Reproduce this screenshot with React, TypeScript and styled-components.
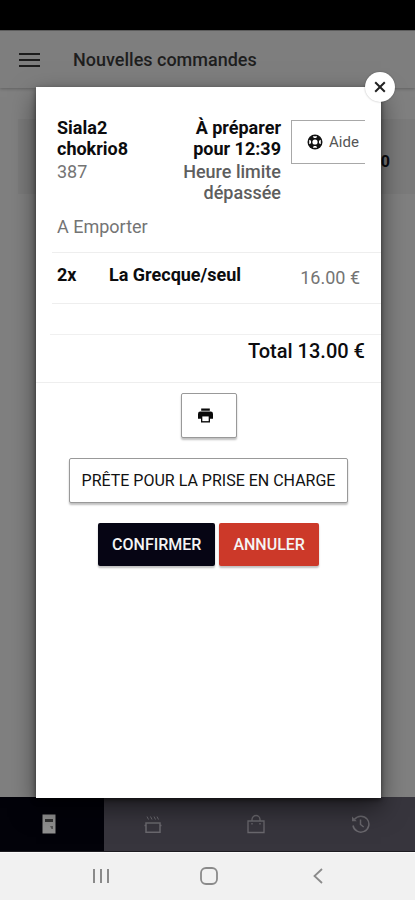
import React from "react";
import styled, { createGlobalStyle, css } from "styled-components";

const GlobalStyle = createGlobalStyle`
  * { box-sizing: border-box; }
  body { margin: 0; background: #000; font-family: Roboto, "Liberation Sans", sans-serif; color: #0c0c0e; }
  button { font-family: inherit; cursor: pointer; }
  h1, p, ul { margin: 0; padding: 0; }
  svg { display: block; }
`;

const Phone = styled.div`
  display: flex;
  flex-direction: column;
  min-height: 100vh;
`;

const StatusBar = styled.div`
  height: 30px;
  background: #000;
`;

const Screen = styled.div`
  position: relative;
  flex: 1;
  display: flex;
  flex-direction: column;
`;

const AppBar = styled.header`
  position: relative;
  display: flex;
  align-items: center;
  gap: 32px;
  height: 58px;
  padding: 0 18px;
  background: #7e7e7e;
  border-top: 1px solid #5c5c5c;
  box-shadow: 0 1px 3px rgba(0, 0, 0, 0.25);
`;

const MenuButton = styled.button`
  padding: 0;
  border: 0;
  background: none;
  color: #1c1c1c;
`;

const Title = styled.h1`
  font-size: 18px;
  font-weight: 500;
  line-height: 24px;
  color: #1e1e1e;
`;

const Orders = styled.main`
  flex: 1;
  padding: 31px 0 0 18px;
  background: #808080;
`;

const OrderCard = styled.div`
  display: flex;
  align-items: center;
  justify-content: flex-end;
  height: 75px;
  padding: 10px 25px 0 0;
  background: #7b7b7b;
  font-size: 16px;
  font-weight: 700;
`;

const Tabs = styled.nav`
  display: grid;
  grid-template-columns: repeat(4, 1fr);
  height: 55px;
  background: #37353d;
  border-bottom: 1px solid #1c1b20;
`;

const Tab = styled.button<{ $active?: boolean }>`
  display: flex;
  align-items: center;
  justify-content: center;
  padding: 0 6px 0 0;
  border: 0;
  background: ${(p) => (p.$active ? "#020209" : "transparent")};
  color: ${(p) => (p.$active ? "#909090" : "#6a686e")};
`;

const Overlay = styled.div`
  position: absolute;
  inset: 0;
  display: flex;
  padding: 57px 34px 54px 36px;
`;

const Dialog = styled.section`
  position: relative;
  flex: 1;
  min-width: 0;
  background: #fff;
  box-shadow: 0 10px 24px rgba(0, 0, 0, 0.5), 0 2px 5px rgba(0, 0, 0, 0.5);
`;

const CloseButton = styled.button`
  position: absolute;
  top: -15px;
  right: -14px;
  display: flex;
  align-items: center;
  justify-content: center;
  width: 30px;
  height: 30px;
  padding: 0;
  border: 0;
  border-radius: 50%;
  background: #fff;
  box-shadow: 0 0 2px rgba(0, 0, 0, 0.3);
  color: #222;
`;

const Summary = styled.div`
  display: flex;
  gap: 10px;
  padding: 30px 16px 0 21px;
  font-size: 18px;
  line-height: 21px;
`;

const Customer = styled.div`
  flex: 1;
`;

const Deadline = styled.div`
  width: 110px;
  text-align: right;
`;

const Strong = styled.p`
  margin-bottom: 2px;
  font-weight: 700;
`;

const Muted = styled.p<{ $medium?: boolean }>`
  color: ${(p) => (p.$medium ? "#5e5e5e" : "#747474")};
  font-weight: ${(p) => (p.$medium ? 500 : 400)};
`;

const HelpButton = styled.button`
  display: flex;
  align-items: center;
  align-self: flex-start;
  gap: 6px;
  width: 74px;
  height: 44px;
  margin-top: 3px;
  padding: 0 0 0 15px;
  border: 1px solid #a8a8a8;
  border-right: 0;
  background: #fff;
  color: #555;
  font-size: 15px;
`;

const Mode = styled.p`
  padding: 13px 21px 15px;
  font-size: 18px;
  line-height: 21px;
  color: #747474;
`;

const Items = styled.ul`
  margin-left: 16px;
  border-top: 1px solid #eee;
  list-style: none;
`;

const Item = styled.li`
  display: flex;
  height: 51px;
  padding: 11px 21px 0 5px;
  border-bottom: 1px solid #eee;
  font-size: 18px;
  line-height: 21px;
`;

const Quantity = styled.span`
  width: 52px;
  font-weight: 700;
`;

const Name = styled.span`
  flex: 1;
  font-weight: 700;
`;

const Price = styled.span`
  padding-top: 3px;
  color: #747474;
`;

const Total = styled.p`
  margin: 30px 0 0 14px;
  padding: 4px 16px 19px 0;
  border-top: 1px solid #f0f0f0;
  font-size: 20px;
  font-weight: 500;
  line-height: 24px;
  text-align: right;
`;

const Actions = styled.div`
  display: flex;
  flex-direction: column;
  align-items: center;
  gap: 20px;
  padding: 10px 0 0;
  border-top: 1px solid #eee;
`;

const ButtonRow = styled.div`
  display: flex;
  gap: 4px;
`;

const Button = styled.button<{ $tone?: "dark" | "red"; $icon?: boolean }>`
  display: flex;
  align-items: center;
  justify-content: center;
  height: 45px;
  padding: ${(p) => (p.$icon ? "0 23px 0 16px" : "0 12px")};
  border: 1px solid #999;
  border-radius: 2px;
  background: #fff;
  box-shadow: 0 2px 2px rgba(0, 0, 0, 0.25);
  color: #111;
  font-size: 16px;
  font-weight: 400;
  line-height: 20px;
  white-space: nowrap;
  ${(p) =>
    p.$tone &&
    css`
      height: 43px;
      padding: 0 14px;
      border: 0;
      background: ${p.$tone === "dark" ? "#060514" : "#cc3929"};
      color: #f4f4f4;
      font-weight: 500;
    `}
`;

const SystemNav = styled.nav`
  display: grid;
  grid-template-columns: repeat(3, 1fr);
  justify-items: center;
  align-items: center;
  height: 48px;
  padding: 0 43px 2px 47px;
  background: #f1f1f1;
  border-top: 1px solid #fafafa;
`;

const SystemButton = styled.button`
  padding: 0;
  border: 0;
  background: none;
  color: #8a8a8a;
`;

const MenuIcon = () => (
  <svg width="23" height="16" viewBox="0 0 23 16" stroke="currentColor" strokeWidth="2">
    <path d="M1 2h21M1 8h21M1 14h21" />
  </svg>
);

const CloseIcon = () => (
  <svg width="12" height="12" viewBox="0 0 12 12" stroke="currentColor" strokeWidth="2">
    <path d="M1.2 1.2l9.6 9.6M10.8 1.2l-9.6 9.6" />
  </svg>
);

const HelpIcon = () => (
  <svg width="16" height="16" viewBox="0 0 16 16" fill="none">
    <circle cx="8" cy="8" r="7.5" fill="#111" />
    <circle cx="8" cy="8" r="2.6" fill="#fff" />
    <path d="M5.8 2.2h4.4L9.2 4H6.800zM5.800 13.800h4.400L9.200 12H6.800zM2.200 5.800v4.400L4 9.200V6.800zM13.800 5.800v4.400L12 9.200V6.800z" fill="#fff" />
  </svg>
);

const PrintIcon = () => (
  <svg width="15" height="15" viewBox="0 0 16 15">
    <path d="M3.4 0h9.2v2.5H3.4zM2.6 3.3h10.8A2.5 2.5 0 0 1 16 5.8V11h-3.2v4H3.2v-4H0V5.8A2.5 2.5 0 0 1 2.6 3.3z" fill="#090909" />
    <path d="M4.6 8.5h6.8v5H4.6z" fill="#fff" />
  </svg>
);

const ReceiptIcon = () => (
  <svg width="14" height="20" viewBox="0 0 14 20">
    <path d="M0.5 0.5h13v19h-13z" fill="currentColor" />
    <path d="M3 5h8v3H3z" fill="#333" />
    <path d="M8 12h3v3H9.5z" fill="#555" />
  </svg>
);

const CookingIcon = () => (
  <svg width="18" height="20" viewBox="0 0 18 20" fill="none" stroke="currentColor" strokeWidth="1.5">
    <path d="M3 2.500l1.500 3M6.500 2.500L8 5.500M10 2.500l1.500 3M13 2.500l1.500 3" strokeWidth="1" />
    <path d="M2 9h14v9.300H2zM0.500 11.500h1.500M16 11.500h1.500" />
  </svg>
);

const BagIcon = () => (
  <svg width="18" height="20" viewBox="0 0 18 20" fill="none" stroke="currentColor" strokeWidth="1.3">
    <path d="M1 7h16v11.500H1zM5 7V5.500a4 4 0 0 1 8 0V7" />
    <path d="M5 9v1.500M13 9v1.500" />
  </svg>
);

const HistoryIcon = () => (
  <svg width="19" height="20" viewBox="0 0 19 20" fill="none" stroke="currentColor" strokeWidth="1.5">
    <path d="M3.500 5.300A8 8 0 1 1 2 11.500M9.500 5.500v5l3.200 2.500" />
    <path d="M1 2.500v4.800h4.800z" fill="currentColor" stroke="none" />
  </svg>
);

const RecentsIcon = () => (
  <svg width="18" height="16" viewBox="0 0 18 16" stroke="currentColor" strokeWidth="2">
    <path d="M2 1v14M9 1v14M16 1v14" />
  </svg>
);

const HomeIcon = () => (
  <svg width="18" height="18" viewBox="0 0 18 18" fill="none" stroke="currentColor" strokeWidth="1.8">
    <rect x="1" y="1" width="16" height="16" rx="5" />
  </svg>
);

const BackIcon = () => (
  <svg width="10" height="16" viewBox="0 0 10 16" fill="none" stroke="currentColor" strokeWidth="1.8">
    <path d="M9 1L1.500 8 9 15" />
  </svg>
);

const tabs = [
  { label: "Commandes", Icon: ReceiptIcon, active: true },
  { label: "En préparation", Icon: CookingIcon },
  { label: "À emporter", Icon: BagIcon },
  { label: "Historique", Icon: HistoryIcon },
];

const items = [{ quantity: "2x", name: "La Grecque/seul", price: "16.00 €" }];

export default function App() {
  return (
    <>
      <GlobalStyle />
      <Phone>
        <StatusBar />
        <Screen>
          <AppBar>
            <MenuButton aria-label="Menu"><MenuIcon /></MenuButton>
            <Title>Nouvelles commandes</Title>
          </AppBar>
          <Orders>
            <OrderCard>0</OrderCard>
          </Orders>
          <Tabs>
            {tabs.map(({ label, Icon, active }) => (
              <Tab key={label} aria-label={label} $active={active}><Icon /></Tab>
            ))}
          </Tabs>
          <Overlay>
            <Dialog role="dialog" aria-label="Commande 387">
              <CloseButton aria-label="Fermer"><CloseIcon /></CloseButton>
              <Summary>
                <Customer>
                  <Strong>Siala2<br />chokrio8</Strong>
                  <Muted>387</Muted>
                </Customer>
                <Deadline>
                  <Strong>À préparer pour 12:39</Strong>
                  <Muted $medium>Heure limite dépassée</Muted>
                </Deadline>
                <HelpButton><HelpIcon />Aide</HelpButton>
              </Summary>
              <Mode>A Emporter</Mode>
              <Items>
                {items.map((item) => (
                  <Item key={item.name}>
                    <Quantity>{item.quantity}</Quantity>
                    <Name>{item.name}</Name>
                    <Price>{item.price}</Price>
                  </Item>
                ))}
              </Items>
              <Total>Total 13.00 €</Total>
              <Actions>
                <Button $icon aria-label="Imprimer"><PrintIcon /></Button>
                <Button>PRÊTE POUR LA PRISE EN CHARGE</Button>
                <ButtonRow>
                  <Button $tone="dark">CONFIRMER</Button>
                  <Button $tone="red">ANNULER</Button>
                </ButtonRow>
              </Actions>
            </Dialog>
          </Overlay>
        </Screen>
        <SystemNav>
          <SystemButton aria-label="Applications récentes"><RecentsIcon /></SystemButton>
          <SystemButton aria-label="Accueil"><HomeIcon /></SystemButton>
          <SystemButton aria-label="Retour"><BackIcon /></SystemButton>
        </SystemNav>
      </Phone>
    </>
  );
}
